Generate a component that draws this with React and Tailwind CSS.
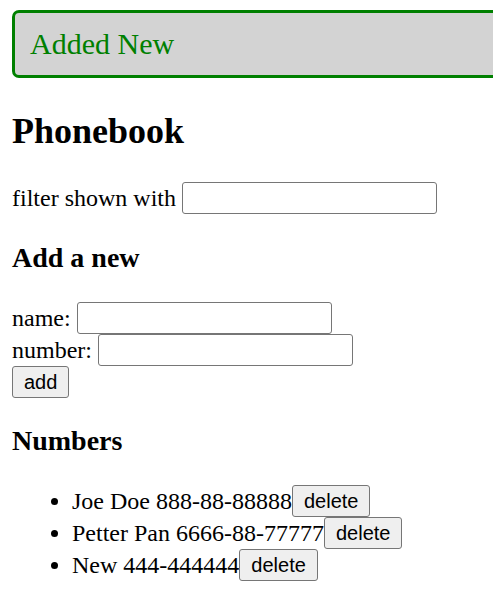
import React from "react";

const inputCls =
  "inline-block align-baseline w-[255px] h-[32px] border border-[#767676] rounded-[3px] bg-white px-[3px] font-['Liberation_Sans',Arial,sans-serif] text-[20px]";
const btnCls =
  "inline-block align-baseline h-[32px] px-[11px] border border-[#767676] rounded-[3px] bg-[#efefef] text-black font-['Liberation_Sans',Arial,sans-serif] text-[20px] leading-[normal]";

const persons = [
  { name: "Joe Doe", number: "888-88-88888" },
  { name: "Petter Pan", number: "6666-88-77777" },
  { name: "New", number: "444-444444" },
];

export default function App() {
  return (
    <div className="min-h-[592px] bg-white overflow-hidden">
      <div className="pt-[10px] pl-[12px] font-['Liberation_Serif','Times_New_Roman',serif] text-[24px] leading-[normal] text-black">
        <div className="w-[490px] h-[68px] flex items-center bg-[#d3d3d3] border-[3px] border-[#008000] rounded-[7px] px-[15px] text-[30px] text-[#008000]">
          Added New
        </div>
        <h2 className="mt-[32px] mb-[29px] text-[36px] font-bold leading-[normal]">Phonebook</h2>
        <div className="flex items-center gap-[6px] h-[34px]">
          <span>filter shown with</span>
          <input className={inputCls} />
        </div>
        <h3 className="mt-[27px] mb-[28px] text-[28px] font-bold leading-[normal]">Add a new</h3>
        <form onSubmit={(e) => e.preventDefault()}>
          <div className="flex items-center gap-[6px] h-[32px]">
            <span>name:</span>
            <input className={inputCls} />
          </div>
          <div className="flex items-center gap-[6px] h-[32px]">
            <span>number:</span>
            <input className={inputCls} />
          </div>
          <div className="h-[32px]">
            <button type="submit" className={btnCls}>add</button>
          </div>
        </form>
        <h3 className="mt-[27px] mb-[28px] text-[28px] font-bold leading-[normal]">Numbers</h3>
        <ul className="list-disc pl-[60px]">
          {persons.map((p) => (
            <li key={p.name} className="h-[32px]">
              <div className="flex items-center h-[32px]">
                <span>
                  {p.name} {p.number}
                </span>
                <button className={btnCls}>delete</button>
              </div>
            </li>
          ))}
        </ul>
      </div>
    </div>
  );
}
